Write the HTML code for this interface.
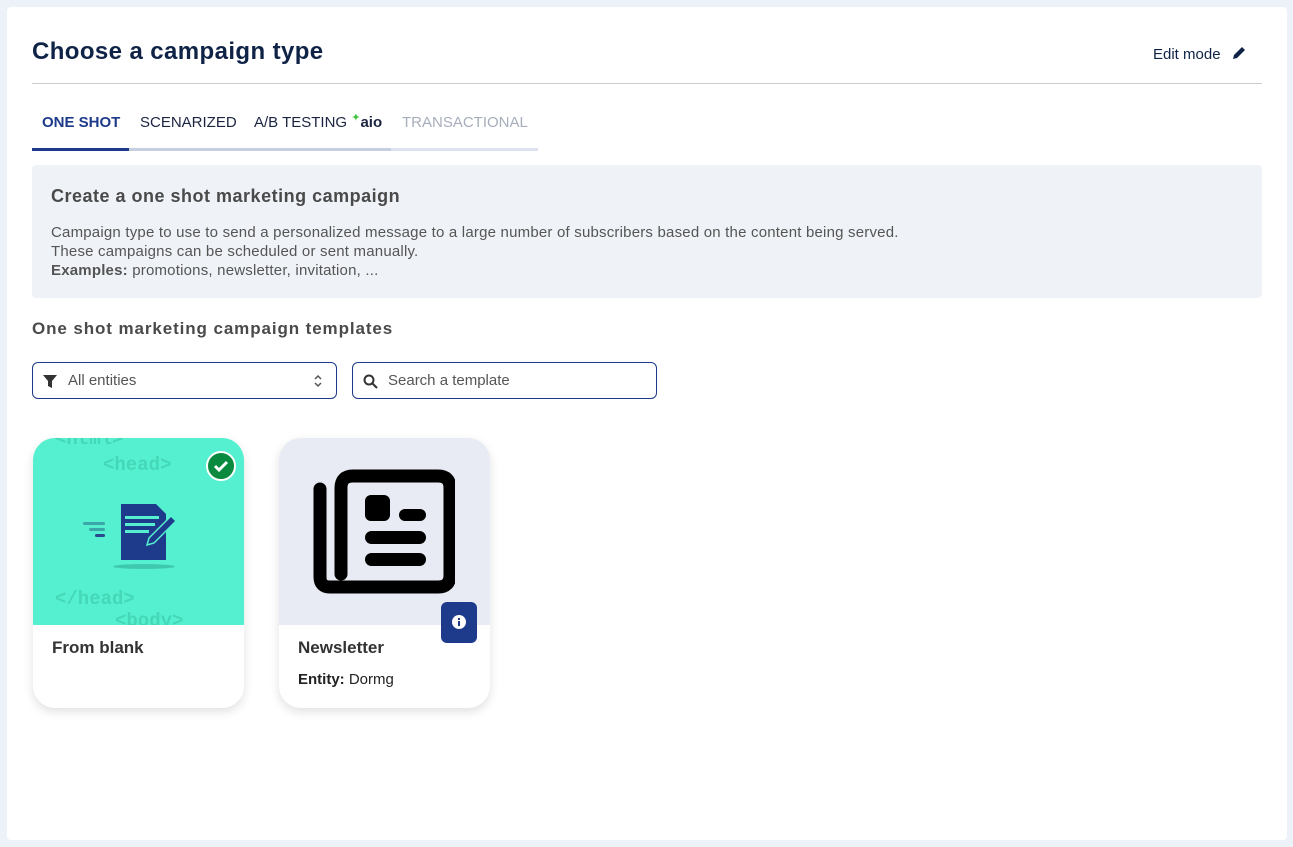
<!DOCTYPE html>
<html><head><style>
*{box-sizing:border-box;margin:0;padding:0}
body{width:1293px;height:847px;background:#edf1f8;font-family:"Liberation Sans",sans-serif;position:relative;overflow:hidden}
.main{position:absolute;left:7px;top:7px;width:1280px;height:833px;background:#fff;border-radius:4px}
.abs{position:absolute}
h1{position:absolute;left:25px;top:31px;font-size:24px;letter-spacing:0.4px;font-weight:bold;color:#0f2347}
.edit{position:absolute;left:1146px;top:38px;font-size:15px;color:#0f2347}
.hr{position:absolute;left:25px;top:76px;width:1230px;height:1px;background:#ccc}
.tab{position:absolute;top:107px;font-size:15px;color:#1b2441;white-space:nowrap}
.info{position:absolute;left:25px;top:158px;width:1230px;height:133px;background:#eff2f7;border-radius:4px;color:#555}
.sel{position:absolute;top:355px;width:305px;height:37px;border:1px solid #1e3a8a;border-radius:6px;font-size:15px;color:#555}
.card{position:absolute;top:431px;width:211px;height:270px;border-radius:22px;background:#fff;box-shadow:0 4px 10px rgba(0,0,0,.12);overflow:hidden}
.code{position:absolute;font-family:"Liberation Mono",monospace;font-weight:bold;font-size:19px;color:#44d8b8}
</style></head><body>
<div class="main">
<h1>Choose a campaign type</h1>
<div class="edit">Edit mode <svg width="16" height="16" viewBox="0 0 16 16" style="vertical-align:-2px;margin-left:6px"><path d="M2 14l1-4 8-8 3 3-8 8z M10 3l3 3" fill="#0f2347"/></svg></div>
<div class="hr"></div>
<div class="tab" style="left:35px;color:#1e3a8a;font-weight:bold">ONE SHOT</div>
<div class="tab" style="left:133px">SCENARIZED</div>
<div class="tab" style="left:247px">A/B TESTING <span style="position:relative;top:-6px;color:#3ec43e;font-size:11px">✦</span><b style="font-size:15px;color:#1b2441">aio</b></div>
<div class="tab" style="left:395px;color:#a6adbb">TRANSACTIONAL</div>
<div class="abs" style="left:25px;top:141px;width:506px;height:3px;background:#dde3ee"></div>
<div class="abs" style="left:122px;top:141px;width:262px;height:3px;background:#c6cfe0"></div>
<div class="abs" style="left:25px;top:141px;width:97px;height:3px;background:#1e3a8a"></div>
<div class="info">
<div style="position:absolute;left:19px;top:21px;font-size:18px;letter-spacing:0.5px;font-weight:bold;color:#4a4a4a">Create a one shot marketing campaign</div>
<div style="position:absolute;left:19px;top:58px;font-size:15px;line-height:19px;letter-spacing:0.2px">Campaign type to use to send a personalized message to a large number of subscribers based on the content being served.<br>These campaigns can be scheduled or sent manually.<br><b>Examples:</b> promotions, newsletter, invitation, ...</div>
</div>
<div class="abs" style="left:25px;top:312px;font-size:17px;letter-spacing:0.9px;font-weight:bold;color:#4a4a4a">One shot marketing campaign templates</div>
<div class="sel" style="left:25px"><svg class="abs" style="left:10px;top:12px" width="14" height="13" viewBox="0 0 14 13"><path d="M0 0h14L9 6v7L5 11V6z" fill="#333"/></svg><span class="abs" style="left:35px;top:9px">All entities</span><svg class="abs" style="left:280px;top:10px" width="10" height="16" viewBox="0 0 10 16"><path d="M2 6l3-3 3 3M2 10l3 3 3-3" stroke="#555" stroke-width="1.5" fill="none"/></svg></div>
<div class="sel" style="left:345px"><svg class="abs" style="left:10px;top:11px" width="15" height="15" viewBox="0 0 15 15"><circle cx="6" cy="6" r="4.5" stroke="#333" stroke-width="2" fill="none"/><path d="M9.5 9.5L14 14" stroke="#333" stroke-width="2"/></svg><span class="abs" style="left:35px;top:9px">Search a template</span></div>
<div class="card" style="left:26px">
<div class="abs" style="left:0;top:0;width:211px;height:187px;background:#55f0cf;overflow:hidden">
<div class="code" style="left:22px;top:-10px">&lt;html&gt;</div>
<div class="code" style="left:70px;top:16px">&lt;head&gt;</div>
<div class="code" style="left:22px;top:150px">&lt;/head&gt;</div>
<div class="code" style="left:82px;top:172px">&lt;body&gt;</div>
<div class="abs" style="left:80px;top:126px;width:62px;height:5px;border-radius:50%;background:#3fc8b0"></div>
<svg class="abs" style="left:50px;top:56px" width="100" height="66" viewBox="0 0 100 66"><rect x="0" y="28" width="22" height="3" rx="1.5" fill="#3aa6a8"/><rect x="6" y="34" width="16" height="3" rx="1.5" fill="#3aa6a8"/><rect x="12" y="40" width="10" height="3" rx="1.5" fill="#2b4a8e"/><path d="M38 10h35l10 10v49H38z" fill="#1e3a8a"/><rect x="42" y="22" width="34" height="3" fill="#55f0cf"/><rect x="42" y="29" width="30" height="3" fill="#55f0cf"/><rect x="42" y="36" width="24" height="3" fill="#55f0cf"/><path d="M66 44l22-22 5 5-22 22-7 2z" fill="#1e3a8a" stroke="#55f0cf" stroke-width="1.5"/></svg>
</div>
<svg class="abs" style="left:173px;top:13px" width="30" height="30"><circle cx="15" cy="15" r="14" fill="#0a8a3e" stroke="#fff" stroke-width="2"/><path d="M9 15l4 4 8-8" stroke="#fff" stroke-width="3" fill="none"/></svg>
<div class="abs" style="left:19px;top:200px;font-size:17px;font-weight:bold;color:#333">From blank</div>
</div>
<div class="card" style="left:272px">
<div class="abs" style="left:0;top:0;width:211px;height:187px;background:#e8ebf3"></div>
<svg class="abs" style="left:34px;top:31px" width="142" height="125" viewBox="0 0 142 125"><path d="M7 20v88q0 10 10 10h108q12 0 12-12V19q0-12-12-12H40q-12 0-12 12v86" stroke="#000" stroke-width="13" fill="none" stroke-linecap="round"/><rect x="52" y="26" width="25" height="26" rx="6"/><rect x="86" y="40" width="27" height="12" rx="6"/><rect x="52" y="62" width="61" height="13" rx="6.5"/><rect x="52" y="84" width="61" height="13" rx="6.5"/></svg>
<div class="abs" style="left:162px;top:164px;width:36px;height:41px;border-radius:6px;background:#1e3a8a"><svg class="abs" style="left:11px;top:13px" width="14" height="14"><circle cx="7" cy="7" r="7" fill="#fff"/><rect x="6" y="6" width="2" height="5" fill="#1e3a8a"/><rect x="6" y="3" width="2" height="2" fill="#1e3a8a"/></svg></div>
<div class="abs" style="left:19px;top:200px;font-size:17px;font-weight:bold;color:#333">Newsletter</div>
<div class="abs" style="left:19px;top:233px;font-size:15px;color:#222"><b>Entity:</b> Dormg</div>
</div>
</div>
</body></html>
